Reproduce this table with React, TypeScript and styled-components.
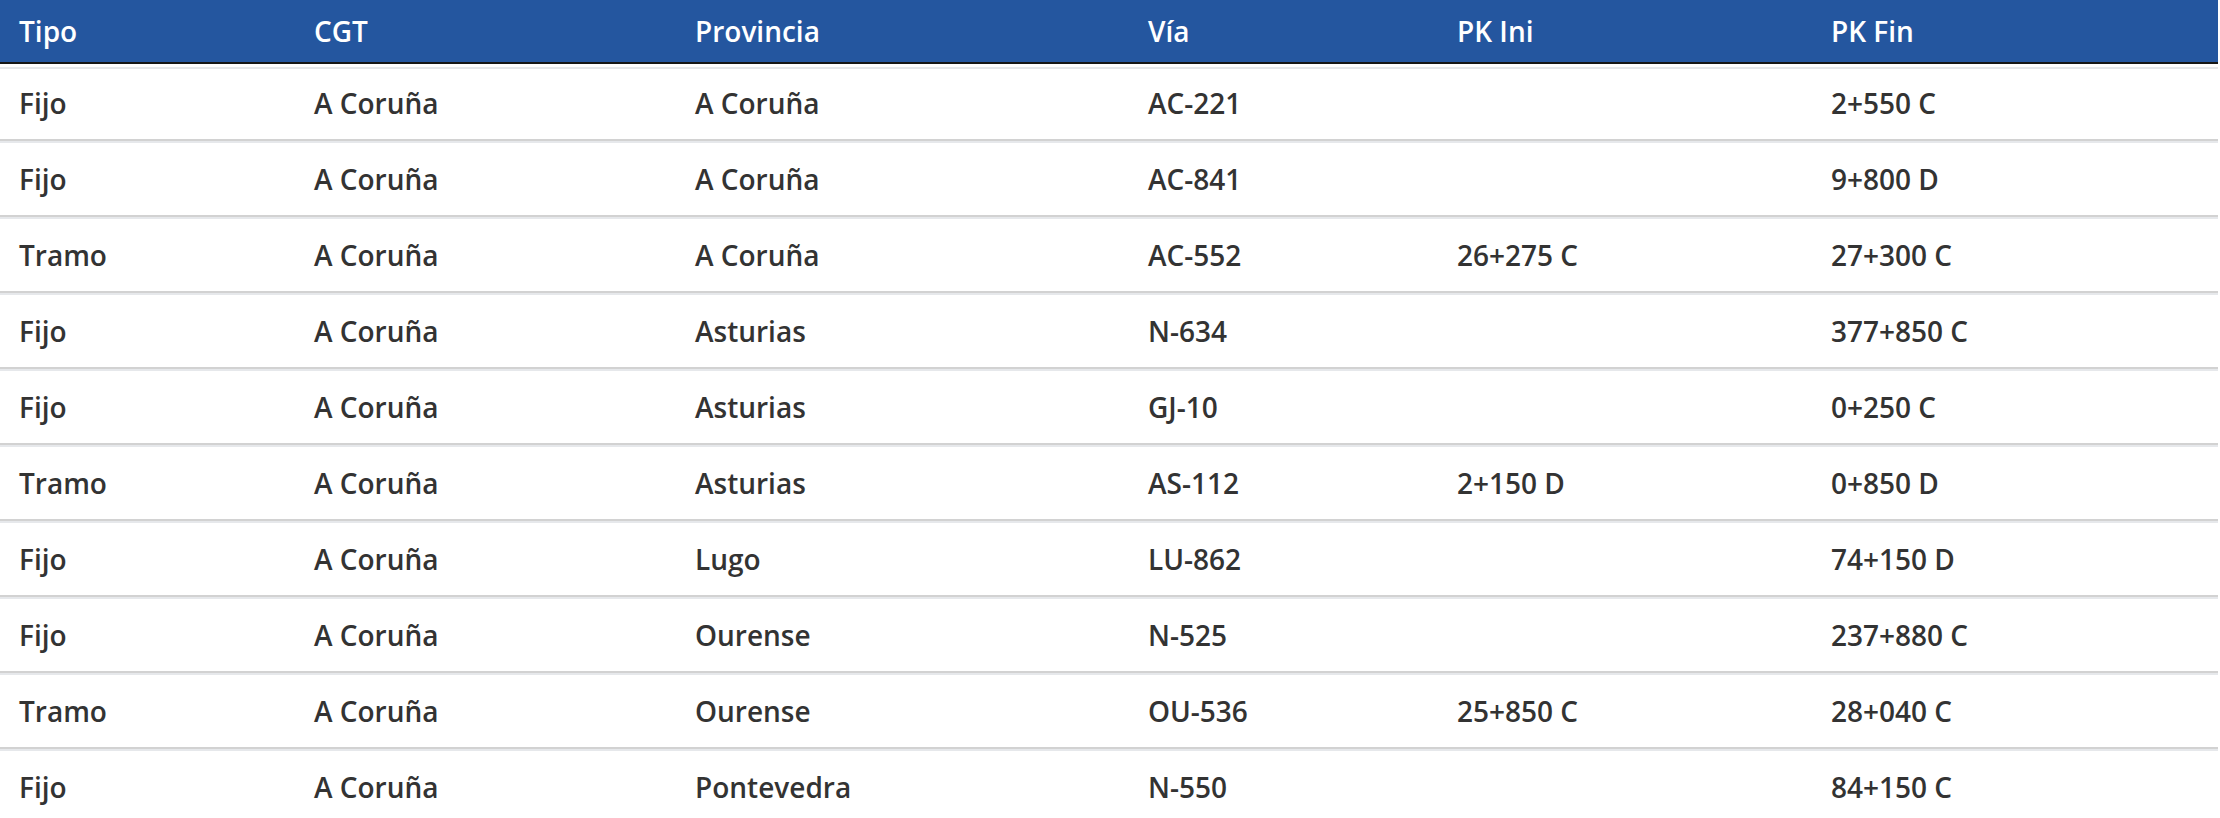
import * as React from "react";
import styled, { createGlobalStyle } from "styled-components";

const GlobalStyle = createGlobalStyle`
  html, body {
    margin: 0;
    padding: 0;
    background: #ffffff;
  }
`;

const COLUMNS = "295px 381px 453px 309px 374px 1fr";

interface Camera {
  tipo: string;
  cgt: string;
  provincia: string;
  via: string;
  pkIni?: string;
  pkFin: string;
}

const cameras: Camera[] = [
  { tipo: "Fijo", cgt: "A Coruña", provincia: "A Coruña", via: "AC-221", pkFin: "2+550 C" },
  { tipo: "Fijo", cgt: "A Coruña", provincia: "A Coruña", via: "AC-841", pkFin: "9+800 D" },
  { tipo: "Tramo", cgt: "A Coruña", provincia: "A Coruña", via: "AC-552", pkIni: "26+275 C", pkFin: "27+300 C" },
  { tipo: "Fijo", cgt: "A Coruña", provincia: "Asturias", via: "N-634", pkFin: "377+850 C" },
  { tipo: "Fijo", cgt: "A Coruña", provincia: "Asturias", via: "GJ-10", pkFin: "0+250 C" },
  { tipo: "Tramo", cgt: "A Coruña", provincia: "Asturias", via: "AS-112", pkIni: "2+150 D", pkFin: "0+850 D" },
  { tipo: "Fijo", cgt: "A Coruña", provincia: "Lugo", via: "LU-862", pkFin: "74+150 D" },
  { tipo: "Fijo", cgt: "A Coruña", provincia: "Ourense", via: "N-525", pkFin: "237+880 C" },
  { tipo: "Tramo", cgt: "A Coruña", provincia: "Ourense", via: "OU-536", pkIni: "25+850 C", pkFin: "28+040 C" },
  { tipo: "Fijo", cgt: "A Coruña", provincia: "Pontevedra", via: "N-550", pkFin: "84+150 C" },
];

const Table = styled.div`
  width: calc(100% - 2px);
  font-family: "Open Sans", "Liberation Sans", sans-serif;
  font-size: 28px;
  font-weight: 600;
  color: #333333;
`;

const HeaderRow = styled.div`
  display: grid;
  grid-template-columns: ${COLUMNS};
  height: 62px;
  align-items: center;
  background: #24569f;
  color: #ffffff;
  border-bottom: 2px solid #161616;
  margin-bottom: 3px;
  box-shadow: 0 3px 0 #ffffff, 0 5px 0 #e5e7ea;
`;

const Row = styled.div`
  display: grid;
  grid-template-columns: ${COLUMNS};
  height: 72px;
  align-items: center;
  border-bottom: 2px solid #d2d2d2;
  box-shadow: 0 2px 0 #e6e8eb;
  margin-bottom: 2px;
`;

const Cell = styled.div`
  padding-left: 19px;
  white-space: nowrap;
  line-height: 1;
`;

export default function App() {
  return (
    <>
      <GlobalStyle />
      <Table>
        <HeaderRow>
          <Cell>Tipo</Cell>
          <Cell>CGT</Cell>
          <Cell>Provincia</Cell>
          <Cell>Vía</Cell>
          <Cell>PK Ini</Cell>
          <Cell>PK Fin</Cell>
        </HeaderRow>
        {cameras.map((c, i) => (
          <Row key={i}>
            <Cell>{c.tipo}</Cell>
            <Cell>{c.cgt}</Cell>
            <Cell>{c.provincia}</Cell>
            <Cell>{c.via}</Cell>
            <Cell>{c.pkIni ?? ""}</Cell>
            <Cell>{c.pkFin}</Cell>
          </Row>
        ))}
      </Table>
    </>
  );
}
